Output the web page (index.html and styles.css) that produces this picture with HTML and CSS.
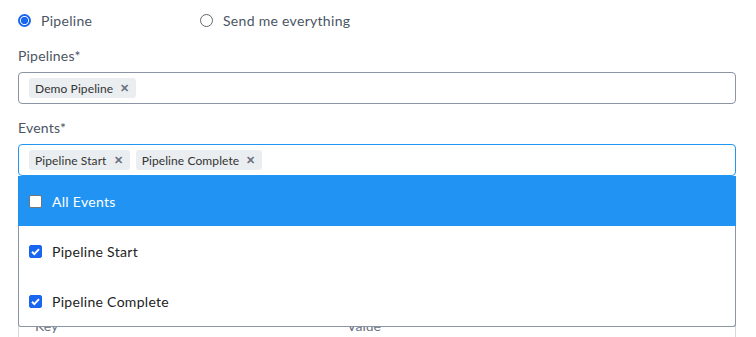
FILE: index.html
```html
<!DOCTYPE html>
<html lang="en">
<head>
    <meta charset="UTF-8">
    <meta name="viewport" content="width=device-width, initial-scale=1.0">
    <title>Notification Rule</title>
    <link rel="stylesheet" href="styles.css">
</head>
<body>
    <div class="form">
        <div class="radio-row">
            <label class="radio-option">
                <input type="radio" name="scope" checked>
                <span>Pipeline</span>
            </label>
            <label class="radio-option">
                <input type="radio" name="scope">
                <span>Send me everything</span>
            </label>
        </div>

        <div class="field">
            <div class="field-label">Pipelines*</div>
            <div class="multi-select">
                <span class="chip">Demo Pipeline <span class="chip-x">&#x2715;</span></span>
            </div>
        </div>

        <div class="field events-field">
            <div class="field-label">Events*</div>
            <div class="multi-select focused">
                <span class="chip">Pipeline Start <span class="chip-x">&#x2715;</span></span>
                <span class="chip">Pipeline Complete <span class="chip-x">&#x2715;</span></span>
            </div>
            <ul class="dropdown">
                <li class="option active"><input type="checkbox"><span>All Events</span></li>
                <li class="option"><input type="checkbox" checked><span>Pipeline Start</span></li>
                <li class="option"><input type="checkbox" checked><span>Pipeline Complete</span></li>
            </ul>
        </div>

        <div class="field">
            <div class="field-label">Headers</div>
            <div class="kv-table">
                <div class="kv-head">
                    <span>Key</span>
                    <span>Value</span>
                </div>
            </div>
        </div>
    </div>
</body>
</html>
```

FILE: styles.css
```css
body {
    margin: 0;
    padding: 0 20px 0 18px;
    height: 337px;
    font-family: Lato, "Open Sans", sans-serif;
    background-color: #fff;
    color: #222;
    overflow: hidden;
}
.form {
    padding-top: 10px;
}
.radio-row {
    display: flex;
    height: 20px;
    align-items: center;
    margin-bottom: 18px;
}
.radio-option {
    display: flex;
    align-items: center;
    width: 182px;
    font-size: 14px;
    color: #4b5563;
    letter-spacing: 0.3px;
}
.radio-option input {
    appearance: none;
    width: 13px;
    height: 13px;
    margin: 0 10px 0 0;
    border: 1px solid #666;
    border-radius: 50%;
    background: #fff;
}
.radio-option input:checked {
    border: 2px solid #1a66f0;
    background: radial-gradient(circle, #1a66f0 0 3.4px, #fff 3.9px);
}
.field {
    margin-bottom: 16px;
}
.field-label {
    font-size: 14px;
    line-height: 16px;
    color: #4b5563;
    margin-bottom: 8px;
    letter-spacing: 0.2px;
}
.events-field {
    position: relative;
}
.multi-select {
    box-sizing: border-box;
    height: 32px;
    border: 1px solid #8a96a3;
    border-radius: 4px;
    padding: 0 10px;
    display: flex;
    align-items: center;
    gap: 6px;
}
.multi-select.focused {
    border-color: #2196f3;
}
.chip {
    display: inline-flex;
    align-items: center;
    height: 20px;
    padding: 0 7px 0 6px;
    background-color: #eaeef1;
    border-radius: 3px;
    font-size: 12px;
    letter-spacing: 0.1px;
    color: #333;
}
.chip-x {
    margin-left: 7px;
    font-size: 11px;
    font-weight: bold;
    color: #6b7280;
}
.dropdown {
    position: absolute;
    top: 56px;
    left: 0;
    right: 0;
    margin: 0;
    padding: 0;
    list-style: none;
    background: #fff;
    border: 1px solid #8a96a3;
    border-top: none;
    border-radius: 0 0 3px 3px;
    z-index: 10;
}
.option {
    display: flex;
    align-items: center;
    height: 50px;
    padding-left: 10px;
    font-size: 14px;
    color: #222;
    letter-spacing: 0.3px;
}
.option.active {
    background-color: #2193f3;
    color: #fff;
    margin: 0 -1px;
    padding-left: 11px;
}
.option input {
    appearance: none;
    flex: none;
    width: 13px;
    height: 13px;
    margin: 0 10px 0 0;
    border: 1px solid #767676;
    border-radius: 2px;
    background: #fff;
}
.option input:checked {
    border-color: #1a66f0;
    background: #1a66f0 url("data:image/svg+xml,%3Csvg xmlns='http://www.w3.org/2000/svg' viewBox='0 0 13 13'%3E%3Cpath d='M3 6.8l2.3 2.3 4.7-5' fill='none' stroke='white' stroke-width='2'/%3E%3C/svg%3E") center/13px no-repeat;
}
.kv-table {
    border: 1px solid #d4d8dd;
    border-radius: 4px;
    height: 150px;
}
.kv-head {
    display: flex;
    padding: 101px 0 0 16px;
    font-size: 14px;
    line-height: 16px;
    color: #6b7280;
}
.kv-head span:first-child {
    width: 312px;
}
```
